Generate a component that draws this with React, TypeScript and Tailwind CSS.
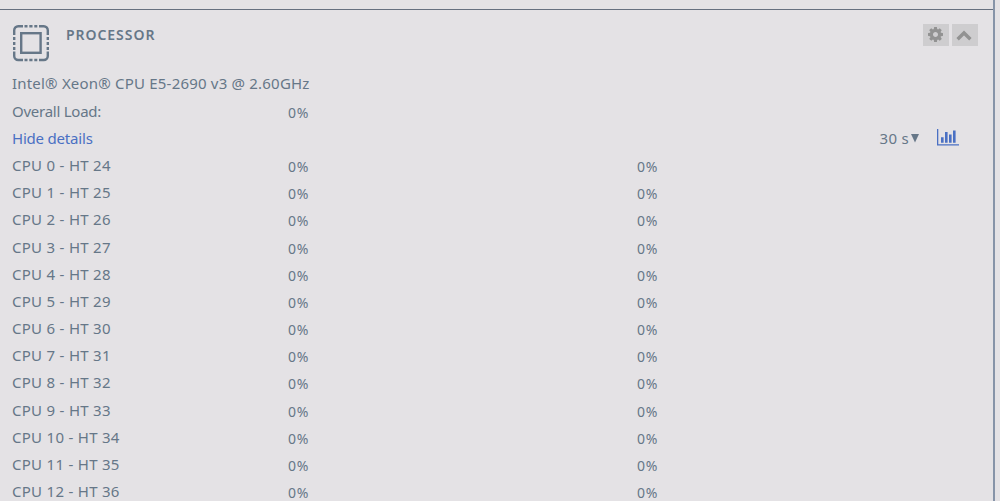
interface CpuCore {
  core: number;
  thread: number;
  coreLoad: number;
  threadLoad: number;
}

const cores: CpuCore[] = Array.from({ length: 13 }, (_, index) => ({
  core: index,
  thread: index + 24,
  coreLoad: 0,
  threadLoad: 0,
}));

const ProcessorIcon = () => (
  <svg width="36" height="37" viewBox="0 0 36 37" fill="none" stroke="currentColor">
    <path
      strokeWidth="2.4"
      d="M1.2 10V5.2a4 4 0 0 1 4-4H10 M26 1.2h4.8a4 4 0 0 1 4 4V10 M34.8 26.500v4.500a4 4 0 0 1-4 4H26 M10 35H5.2a4 4 0 0 1-4-4V26.500"
    />
    <path
      strokeWidth="2.4"
      d="M11.5 1.2h3 M16.3 1.2h3.2 M21.3 1.2h3 M11.5 35h3 M16.3 35h3.2 M21.3 35h3 M1.2 12v3 M1.2 17v3 M1.2 22v3 M34.8 12v3 M34.8 17v3 M34.8 22v3"
    />
    <rect x="8.2" y="8.2" width="19.4" height="19.600" strokeWidth="2.4" />
  </svg>
);

const GearIcon = () => (
  <svg width="15" height="15" viewBox="0 0 1536 1536" fill="currentColor">
    <path d="M1024 768q0-106-75-181t-181-75-181 75-75 181 75 181 181 75 181-75 75-181zm512-109v222q0 12-8 23t-20 13l-185 28q-19 54-39 91 35 50 107 138 10 12 10 25t-9 23q-27 37-99 108t-94 71q-12 0-26-9l-138-108q-44 23-91 38-16 136-29 186-7 28-36 28H657q-14 0-24.500-8.500T621 1506l-28-184q-49-16-90-37l-141 107q-10 9-25 9-14 0-25-11-126-114-165-168-7-10-7-23 0-12 8-23 15-21 51-66.500t54-70.500q-27-50-41-99L29 913q-13-2-21-12.500T0 877V655q0-12 8-23t19-13l186-28q14-46 39-92-40-57-107-138-10-12-10-24 0-10 9-23 26-36 98.500-107.500T337 135q13 0 26 10l138 107q44-23 91-38 16-136 29-186 7-28 36-28h222q14 0 24.500 8.500T915 30l28 184q49 16 90 37l142-107q9-9 24-9 13 0 25 10 129 119 165 170 7 8 7 22 0 12-8 23-15 21-51 66.500t-54 70.500q26 50 41 98l183 28q13 2 21 12.500t8 23.500z" />
  </svg>
);

const ChevronIcon = () => (
  <svg width="16" height="11" viewBox="0 0 16 11" fill="none" stroke="currentColor">
    <path strokeWidth="3.400" d="M1.600 9.300 8 3 14.400 9.300" />
  </svg>
);

const ChartIcon = () => (
  <svg width="22" height="17" viewBox="0 0 22 17" fill="currentColor">
    <path d="M0 0h1.300v15.200H22v1.300H0z" />
    <path d="M4 8.200h2.600v5.500H4z M8 3h2.600v10.700H8z M12 5.500h2.600v8.200H12z M16 1.500h2.600v12.200H16z" />
  </svg>
);

const Load = ({ value }: { value: number }) => (
  <span className="pt-px text-[14px] tracking-[0.7px]">{value}%</span>
);

const App = () => {
  return (
    <div className="flex h-[501px] w-[1000px] overflow-hidden bg-[#e4e2e5] font-['Noto_Sans',sans-serif] text-[#667788]">
      <div className="flex w-[995px] shrink-0 flex-col border-r-2 border-[#8794a8]">
        <div className="h-[10px] shrink-0 border-b border-[#66707f]" />
        <header className="flex h-[60.4px] shrink-0 items-start pr-[15px] pl-[12.6px]">
          <div className="pt-[15px]">
            <ProcessorIcon />
          </div>
          <h2 className="ml-[17.4px] pt-[15px] text-[14px] leading-5 font-semibold tracking-[0.95px]">
            PROCESSOR
          </h2>
          <div className="mt-[14px] ml-auto flex gap-[3px] text-[#929292]">
            <button className="flex h-[22px] w-[26px] items-center justify-center bg-[#cecdcf] pr-[2px] pb-px">
              <GearIcon />
            </button>
            <button className="flex h-[22px] w-[26px] items-center justify-center bg-[#cecdcf] pr-[2px]">
              <ChevronIcon />
            </button>
          </div>
        </header>
        <div className="pl-3 text-[15px] leading-[27.2px]">
          <div className="h-[27.2px] tracking-[0.2px]">
            Intel® Xeon® CPU E5-2690 v3 @ 2.60GHz
          </div>
          <div className="grid h-[27.2px] grid-cols-[276px_1fr]">
            <span className="tracking-[-0.25px]">Overall Load:</span>
            <Load value={0} />
          </div>
          <div className="flex h-[27.2px] items-center">
            <a className="tracking-[-0.2px] text-[#4a70c3]">Hide details</a>
            <div className="ml-auto flex items-center pr-[34px]">
              <span className="pt-px tracking-[0.3px]">30 s</span>
              <svg className="mt-px ml-[2px]" width="8" height="9" viewBox="0 0 8 9" fill="currentColor">
                <path d="M0 0h8L4 8.500z" />
              </svg>
              <span className="mb-px ml-[18px] text-[#4a70c3]">
                <ChartIcon />
              </span>
            </div>
          </div>
          {cores.map((cpu) => (
            <div key={cpu.core} className="grid h-[27.2px] grid-cols-[276px_349px_1fr]">
              <span className="tracking-[0.28px]">
                CPU {cpu.core} - HT {cpu.thread}
              </span>
              <Load value={cpu.coreLoad} />
              <Load value={cpu.threadLoad} />
            </div>
          ))}
        </div>
      </div>
    </div>
  );
};

export default App;
